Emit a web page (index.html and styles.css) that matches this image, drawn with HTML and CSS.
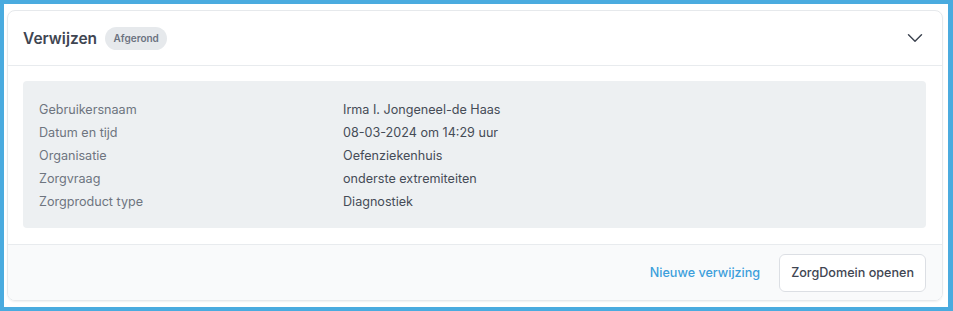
FILE: index.html
```html
<!DOCTYPE html>
<html lang="nl">
<head>
    <meta charset="UTF-8">
    <meta name="viewport" content="width=device-width, initial-scale=1.0">
    <title>Verwijzen</title>
    <link rel="stylesheet" href="styles.css">
</head>
<body>
    <div class="frame">
        <div class="card">
            <div class="card-header">
                <h2 class="title">Verwijzen</h2>
                <span class="badge">Afgerond</span>
                <button class="toggle" aria-label="Inklappen">
                    <svg width="16" height="16" viewBox="0 0 16 16" fill="none">
                        <path d="M1.5 4.8 L8 11.2 L14.5 4.8" stroke="#3f4652" stroke-width="1.5" stroke-linecap="round" stroke-linejoin="round"/>
                    </svg>
                </button>
            </div>
            <div class="card-body">
                <dl class="details">
                    <dt>Gebruikersnaam</dt>
                    <dd>Irma I. Jongeneel-de Haas</dd>
                    <dt>Datum en tijd</dt>
                    <dd>08-03-2024 om 14:29 uur</dd>
                    <dt>Organisatie</dt>
                    <dd>Oefenziekenhuis</dd>
                    <dt>Zorgvraag</dt>
                    <dd>onderste extremiteiten</dd>
                    <dt>Zorgproduct type</dt>
                    <dd>Diagnostiek</dd>
                </dl>
            </div>
            <div class="card-footer">
                <a href="#" class="link">Nieuwe verwijzing</a>
                <button class="btn">ZorgDomein openen</button>
            </div>
        </div>
    </div>
</body>
</html>
```

FILE: styles.css
```css
html, body {
    margin: 0;
    padding: 0;
}
body {
    font-family: Inter, "Noto Sans", sans-serif;
    color: #3f4652;
    background-color: #ffffff;
}
.frame {
    box-sizing: border-box;
    width: 953px;
    height: 311px;
    border: 4px solid #4aabdf;
    border-right-width: 5px;
    padding: 6px 5px 6px 3px;
}
.card {
    height: 100%;
    box-sizing: border-box;
    border: 1px solid #e6e9ec;
    border-radius: 8px;
    box-shadow: 0 1px 2px rgba(0, 0, 0, 0.06);
    overflow: hidden;
    display: flex;
    flex-direction: column;
}
.card-header {
    height: 54px;
    display: flex;
    align-items: center;
    padding: 0 16px 0 15px;
    border-bottom: 1px solid #e8ebee;
}
.title {
    margin: 0;
    font-size: 15.5px;
    font-weight: 600;
    color: #3f4652;
}
.badge {
    margin-left: 8px;
    height: 23px;
    padding: 0 8.5px;
    display: inline-flex;
    align-items: center;
    border-radius: 12px;
    background-color: #e6e9ec;
    color: #6b7280;
    font-size: 10px;
    font-weight: 600;
}
.toggle {
    margin-left: auto;
    margin-right: 3px;
    border: none;
    background: none;
    padding: 0;
    display: flex;
}
.card-body {
    padding: 15px 16px 16px 15px;
    border-bottom: 1px solid #e8ebee;
}
.details {
    margin: 0;
    padding: 17px 16px 15px;
    background-color: #edf0f2;
    border-radius: 4px;
    display: grid;
    grid-template-columns: 304px 1fr;
    font-size: 12.6px;
    line-height: 23px;
}
.details dt {
    color: #6e7580;
}
.details dd {
    margin: 0;
    color: #454c57;
}
.card-footer {
    flex: 1;
    background-color: #f9fafb;
    display: flex;
    align-items: center;
    justify-content: flex-end;
    gap: 19px;
    padding: 0 16px;
}
.link {
    color: #3d9fdb;
    text-decoration: none;
    font-size: 12.6px;
    font-weight: 500;
}
.btn {
    height: 38px;
    padding: 0 11px;
    border: 1px solid #dcdfe4;
    border-radius: 6px;
    background-color: #ffffff;
    color: #3f4652;
    font-family: inherit;
    font-size: 12.6px;
    font-weight: 500;
}
```
